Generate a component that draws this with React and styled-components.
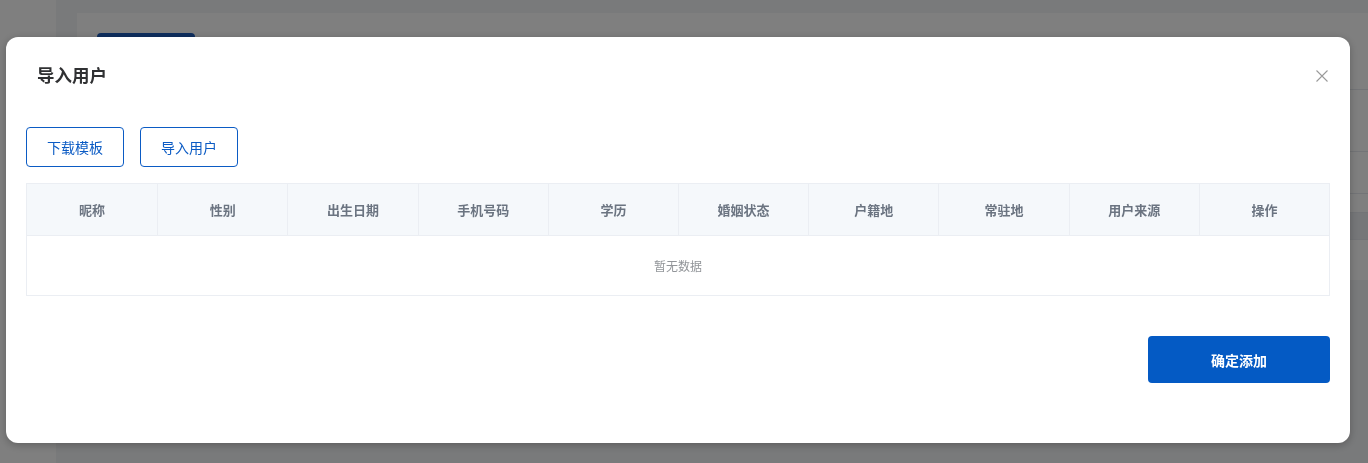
import styled, { createGlobalStyle } from "styled-components";

const GlobalStyle = createGlobalStyle`
  html, body {
    margin: 0;
    padding: 0;
    height: 100%;
    overflow: hidden;
  }
  body {
    font-family: "Noto Sans CJK SC", "Noto Sans", "Liberation Sans", sans-serif;
    background: #f3f4f6;
  }
  * {
    box-sizing: border-box;
  }
`;

// page that sits behind the dialog
const Page = styled.div`
  display: flex;
  width: 100vw;
  height: 100vh;
`;

const Sidebar = styled.aside`
  width: 56px;
  background: #ffffff;
  flex-shrink: 0;
`;

const Main = styled.main`
  flex: 1;
  padding: 13px 0 0 21px;
  background: #f3f4f6;
`;

const Card = styled.section`
  background: #ffffff;
  height: 267px;
  padding: 20px 0 0 20px;
`;

const PrimaryBg = styled.div`
  width: 98px;
  height: 40px;
  border-radius: 4px;
  background: #1c5cbc;
`;

const BgTable = styled.div`
  margin-top: 16px;
  border-top: 1px solid #e6e9ee;
`;

const BgRow = styled.div`
  height: ${(p) => p.$h}px;
  border-bottom: ${(p) => (p.$last ? "none" : "1px solid #e6e9ee")};
  background: ${(p) => (p.$hover ? "#eceef2" : "#ffffff")};
`;

// dialog
const Overlay = styled.div`
  position: fixed;
  inset: 0;
  background: rgba(0, 0, 0, 0.5);
  padding: 37px 0 0 6px;
`;

const Modal = styled.div`
  width: 1344px;
  height: 406px;
  background: #ffffff;
  border-radius: 12px;
  box-shadow: 0 2px 8px rgba(0, 0, 0, 0.25);
  padding: 0 20px;
  display: flex;
  flex-direction: column;
`;

const Header = styled.div`
  height: 74px;
  display: flex;
  align-items: center;
  justify-content: space-between;
  padding: 0 2px 0 11px;
`;

const Title = styled.h2`
  margin: 0;
  font-size: 17.5px;
  font-weight: 700;
  color: #303133;
`;

const Close = styled.button`
  border: none;
  background: none;
  padding: 0;
  width: 12px;
  height: 12px;
  margin-top: 4px;
  display: flex;
  cursor: pointer;
`;

const Toolbar = styled.div`
  display: flex;
  gap: 16px;
  margin-top: 16px;
`;

const OutlineButton = styled.button`
  width: 98px;
  height: 40px;
  border: 1px solid #0b5bc4;
  border-radius: 4px;
  background: #ffffff;
  color: #0b5bc4;
  font-family: inherit;
  font-size: 14px;
  cursor: pointer;
`;

const Table = styled.div`
  margin-top: 16px;
  border: 1px solid #ebeef3;
`;

const HeadRow = styled.div`
  display: grid;
  grid-template-columns: repeat(10, 1fr);
  height: 52px;
  background: #f5f8fb;
  border-bottom: 1px solid #ebeef3;
`;

const HeadCell = styled.div`
  display: flex;
  align-items: center;
  justify-content: center;
  font-size: 13px;
  font-weight: 600;
  color: #6b7481;
  border-left: ${(p) => (p.$first ? "none" : "1px solid #ebeef3")};
`;

const Empty = styled.div`
  height: 59px;
  display: flex;
  align-items: center;
  justify-content: center;
  font-size: 12px;
  color: #929599;
`;

const Footer = styled.div`
  display: flex;
  justify-content: flex-end;
  margin-top: 40px;
`;

const SubmitButton = styled.button`
  width: 182px;
  height: 47px;
  border: none;
  border-radius: 4px;
  background: #045ac4;
  color: #ffffff;
  font-family: inherit;
  font-size: 14px;
  font-weight: 600;
  cursor: pointer;
`;

const columns = [
  "昵称",
  "性别",
  "出生日期",
  "手机号码",
  "学历",
  "婚姻状态",
  "户籍地",
  "常驻地",
  "用户来源",
  "操作",
];

const App = () => {
  return (
    <>
      <GlobalStyle />
      <Page>
        <Sidebar />
        <Main>
          <Card>
            <PrimaryBg />
            <BgTable>
              <BgRow $h={62} />
              <BgRow $h={42} />
              <BgRow $h={19} />
              <BgRow $h={27} $hover />
              <BgRow $h={40} $last />
            </BgTable>
          </Card>
        </Main>
      </Page>
      <Overlay>
        <Modal>
          <Header>
            <Title>导入用户</Title>
            <Close aria-label="关闭">
              <svg width="12" height="12" viewBox="0 0 12 12">
                <path
                  d="M0.5 0.5 L11.5 11.5 M11.5 0.5 L0.5 11.5"
                  stroke="#9a9a9a"
                  strokeWidth="1.1"
                  fill="none"
                />
              </svg>
            </Close>
          </Header>
          <Toolbar>
            <OutlineButton>下载模板</OutlineButton>
            <OutlineButton>导入用户</OutlineButton>
          </Toolbar>
          <Table>
            <HeadRow>
              {columns.map((c, i) => (
                <HeadCell key={c} $first={i === 0}>
                  {c}
                </HeadCell>
              ))}
            </HeadRow>
            <Empty>暂无数据</Empty>
          </Table>
          <Footer>
            <SubmitButton>确定添加</SubmitButton>
          </Footer>
        </Modal>
      </Overlay>
    </>
  );
};

export default App;
